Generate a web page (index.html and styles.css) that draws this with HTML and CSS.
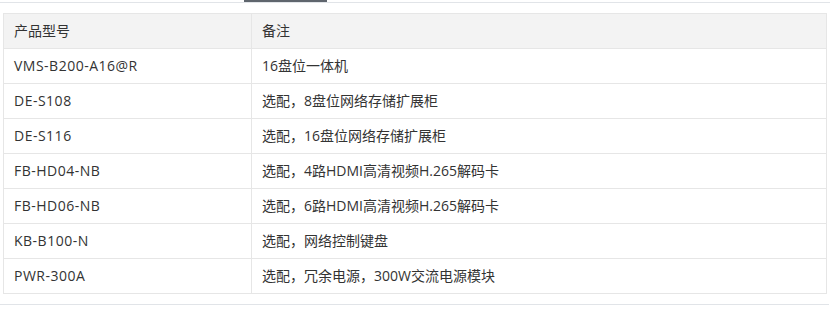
FILE: index.html
```html
<!DOCTYPE html>
<html lang="zh">
<head>
<meta charset="utf-8">
<link rel="stylesheet" href="styles.css">
</head>
<body>
<div class="tabbar"><span class="tab-active"></span></div>
<table class="spec">
  <thead>
    <tr><th class="c1">产品型号</th><th>备注</th></tr>
  </thead>
  <tbody>
    <tr><td class="model">VMS-B200-A16@R</td><td>16盘位一体机</td></tr>
    <tr><td class="model">DE-S108</td><td>选配，8盘位网络存储扩展柜</td></tr>
    <tr><td class="model">DE-S116</td><td>选配，16盘位网络存储扩展柜</td></tr>
    <tr><td class="model">FB-HD04-NB</td><td>选配，4路HDMI高清视频H.265解码卡</td></tr>
    <tr><td class="model">FB-HD06-NB</td><td>选配，6路HDMI高清视频H.265解码卡</td></tr>
    <tr><td class="model">KB-B100-N</td><td>选配，网络控制键盘</td></tr>
    <tr><td class="model">PWR-300A</td><td>选配，冗余电源，300W交流电源模块</td></tr>
  </tbody>
</table>
<div class="footline"></div>
</body>
</html>
```
FILE: styles.css
```css
html, body {
  margin: 0;
  padding: 0;
  background: #fff;
}
body {
  font-family: "Open Sans", "Noto Sans CJK SC", sans-serif;
  font-size: 14px;
  color: #333;
}
.tabbar {
  height: 2px;
  border-bottom: 1px solid #e1e4e8;
  display: flex;
  padding-left: 244px;
  width: 586px;
}
.tab-active {
  display: block;
  width: 83px;
  height: 2px;
  background: #5f656d;
}
.spec {
  margin: 10px 0 0 3px;
  width: 824px;
  border-collapse: collapse;
  border: 1px solid #e6e6e6;
}
.spec tr {
  height: 35px;
}
.spec th, .spec td {
  border: 1px solid #e6e6e6;
  padding: 0 10px;
  text-align: left;
  font-weight: normal;
  line-height: 20px;
}
.spec th {
  background: #f3f3f3;
}
.spec .c1 {
  width: 227px;
}
.spec .model {
  letter-spacing: 0.5px;
}
.footline {
  margin-top: 10px;
  width: 829px;
  border-top: 1px solid #e1e4e8;
}
```
